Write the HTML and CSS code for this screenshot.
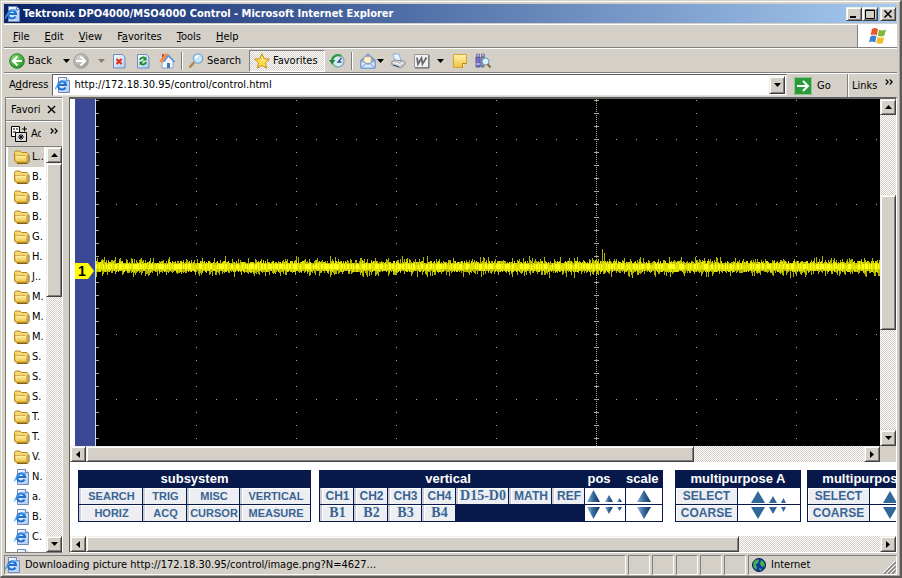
FILE: index.html
```html
<!DOCTYPE html>
<html lang="en">
<head>
<meta charset="utf-8">
<title>Tektronix DPO4000/MSO4000 Control</title>
<link rel="stylesheet" href="styles.css">
</head>
<body>
<svg class="defs" aria-hidden="true">
  <defs>
    <linearGradient id="gold" x1="0" y1="0" x2="0" y2="1"><stop offset="0" stop-color="#fff3a8"/><stop offset="1" stop-color="#efc244"/></linearGradient>
    <linearGradient id="paper" x1="0" y1="0" x2="1" y2="1"><stop offset="0" stop-color="#ffffff"/><stop offset="1" stop-color="#a9c8f2"/></linearGradient>
    <radialGradient id="green" cx=".35" cy=".3" r=".8"><stop offset="0" stop-color="#8fdc78"/><stop offset="1" stop-color="#1f8a1f"/></radialGradient>
    <radialGradient id="grey" cx=".35" cy=".3" r=".8"><stop offset="0" stop-color="#d2d2d0"/><stop offset="1" stop-color="#9c9c9a"/></radialGradient>
    <linearGradient id="steel" x1="0" y1="0" x2="1" y2="0"><stop offset="0" stop-color="#8fb4d6"/><stop offset=".5" stop-color="#34679c"/><stop offset="1" stop-color="#123459"/></linearGradient>
    <symbol id="folder" viewBox="0 0 16 16"><path d="M.5 12V3.500l1-1.500h4.500l1.500 1.500h5.500l1 1V12l-1 1.500H2z" fill="#f5d774" stroke="#b58a1f"/><path d="M1 6.500h10.500l1 1V13H2L1 12z" fill="url(#gold)" stroke="#c79a2c" stroke-width=".7"/><path d="M15 6v6.500L13.500 14.500H3" fill="none" stroke="#80621e"/></symbol>
    <symbol id="page" viewBox="0 0 16 16"><path d="M3.500.5h8l3 3v12h-11z" fill="url(#paper)" stroke="#7188b4"/><path d="M11.500.5v3h3" fill="#fff" stroke="#7188b4"/><path d="M10.500 10.500A4 4 0 1 1 11 8H4" fill="none" stroke="#1f6fd0" stroke-width="2.200"/><path d="M1 12.500C-.5 9 9 2 12.500 4.500" fill="none" stroke="#4aa3ee" stroke-width="1.200"/></symbol>
    <symbol id="up" viewBox="0 0 7 4"><path d="M0 4h7L3.500 0z"/></symbol>
    <symbol id="down" viewBox="0 0 7 4"><path d="M0 0h7L3.500 4z"/></symbol>
    <symbol id="left" viewBox="0 0 4 7"><path d="M4 0v7L0 3.500z"/></symbol>
    <symbol id="right" viewBox="0 0 4 7"><path d="M0 0v7l4-3.500z"/></symbol>
    <symbol id="more" viewBox="0 0 8 6"><path d="M.7.5L3.200 3 .7 5.500M4.700.5L7.200 3 4.700 5.500" fill="none" stroke="#000" stroke-width="1.200"/></symbol>
  </defs>
</svg>

<div class="window">
  <header class="titlebar">
    <svg class="icon"><use href="#page"/></svg>
    <h1 class="title">Tektronix DPO4000/MSO4000 Control - Microsoft Internet Explorer</h1>
    <div class="winbuttons">
      <button class="bevel winbtn" aria-label="Minimize"><svg viewBox="0 0 12 10"><path d="M2 7h6v2H2z"/></svg></button>
      <button class="bevel winbtn" aria-label="Maximize"><svg viewBox="0 0 12 10"><path d="M1.500 1h9v8.500h-9zM1 1.500h10" fill="none" stroke="#000"/></svg></button>
      <button class="bevel winbtn close" aria-label="Close"><svg viewBox="0 0 12 10"><path d="M2.500 1.500l7 7M9.500 1.500l-7 7" stroke="#000" stroke-width="1.600"/></svg></button>
    </div>
  </header>

  <div class="menurow">
    <nav class="menubar">
      <button class="menu"><u>F</u>ile</button>
      <button class="menu"><u>E</u>dit</button>
      <button class="menu"><u>V</u>iew</button>
      <button class="menu">F<u>a</u>vorites</button>
      <button class="menu"><u>T</u>ools</button>
      <button class="menu"><u>H</u>elp</button>
    </nav>
    <div class="flagbox">
      <svg class="flag" viewBox="0 0 20 18"><path d="M4 2c2-1.500 4-1 6 .2L8.800 8.500C7 7.300 5 7 2.600 8.300z" fill="#e8582c"/><path d="M11 2.800c2 1 4.500 1 7-.4l-1.600 6.200c-2 1.300-4.500 1.200-6.600.2z" fill="#7db83a"/><path d="M2.400 9.400c2-1.400 4-1.200 6.100 0l-1.300 6.200c-2-1.200-4-1.400-6.200 0z" fill="#3b7fd8"/><path d="M9.600 9.900c2 1.100 4.500 1 6.600 0l-1.500 6c-2.200 1.300-4.300 1.200-6.400.2z" fill="#f5bd28"/></svg>
    </div>
  </div>

  <div class="toolbar">
    <button class="tool back"><svg class="icon" viewBox="0 0 16 16"><circle cx="8" cy="8" r="7.300" fill="url(#green)" stroke="#27802a"/><path d="M8.500 3.500L4 8l4.500 4.500M4.500 8H13" fill="none" stroke="#fff" stroke-width="2"/></svg>Back</button>
    <button class="tool drop" aria-label="Back history"><svg class="arrow"><use href="#down"/></svg></button>
    <button class="tool forward" aria-label="Forward"><svg class="icon" viewBox="0 0 16 16"><circle cx="8" cy="8" r="7.300" fill="url(#grey)" stroke="#a0a09c"/><path d="M7.500 3.500L12 8l-4.500 4.500M11.500 8H3" fill="none" stroke="#fff" stroke-width="2"/></svg></button>
    <button class="tool drop faded" aria-label="Forward history"><svg class="arrow"><use href="#down"/></svg></button>
    <button class="tool stop" aria-label="Stop"><svg class="icon" viewBox="0 0 16 16"><path d="M2.500 1.500h9l2.500 2.500v11H2.500z" fill="url(#paper)" stroke="#6f8cc0"/><path d="M5.500 6l5 5M10.500 6l-5 5" stroke="#e03412" stroke-width="2.200"/></svg></button>
    <button class="tool refresh" aria-label="Refresh"><svg class="icon" viewBox="0 0 16 16"><path d="M2.500 1.500h9l2.500 2.500v11H2.500z" fill="url(#paper)" stroke="#6f8cc0"/><path d="M5 7c.5-3 4-3 5-1.500M11 9c-.5 3-4 3-5 1.500" fill="none" stroke="#168c20" stroke-width="1.800"/><path d="M11.500 3.500v4h-4zM4.500 12.500v-4h4z" fill="#168c20"/></svg></button>
    <button class="tool home" aria-label="Home"><svg class="icon" viewBox="0 0 16 16"><path d="M3 8l6-5 5 5v7H3z" fill="#f4f7ff" stroke="#7f94bb" stroke-width=".8"/><path d="M3 1h2v4H3z" fill="#b94b31"/><path d="M0 8.500L6.500.500h3l-5 9z" fill="#ee8e48"/><path d="M5 8.500l4.500-6 6 6.500" fill="none" stroke="#6291d8" stroke-width="1.600"/><path d="M8 10h3v5H8z" fill="#3f76be"/></svg></button>
    <span class="sep"></span>
    <button class="tool search"><svg class="icon" viewBox="0 0 16 16"><path d="M6 9.500L1.500 14.500" stroke="#b98245" stroke-width="2.600"/><circle cx="10" cy="5.500" r="4.700" fill="#c9e8fc" stroke="#7fa6cd" stroke-width="1.300"/><path d="M7.500 5a3 3 0 0 1 3-2.300" stroke="#fff" stroke-width="1.500" fill="none"/></svg>Search</button>
    <button class="tool favorites"><svg class="icon" viewBox="0 0 16 16"><path d="M8 .8l2.200 4.900 5.200.5-3.900 3.600 1.200 5.300L8 12.400l-4.700 2.700 1.200-5.300L.6 6.200l5.200-.5z" fill="#ffdc4e" stroke="#c88c12"/><path d="M8 3l1 3.500 3.500.5L8 8z" fill="#fff6b0"/></svg>Favorites</button>
    <button class="tool history" aria-label="History"><svg class="icon" viewBox="0 0 16 16"><circle cx="9" cy="8" r="6" fill="#d6ecfa" stroke="#8ea6b9" stroke-width="1.500"/><path d="M12 3A6 6 0 0 0 3 8" fill="none" stroke="#2c9b48" stroke-width="2.400"/><path d="M4 10.500A6 6 0 0 0 9 14" fill="none" stroke="#7cc58c" stroke-width="1.500"/><path d="M0 7h6.500L3 11.500z" fill="#218a38"/><path d="M12.500 5L9 9h3.500" fill="none" stroke="#31536e" stroke-width="1.300"/></svg></button>
    <span class="sep"></span>
    <button class="tool mail" aria-label="Mail"><svg class="icon" viewBox="0 0 16 16"><path d="M1 7l7-6 7 6v8H1z" fill="#86afe4" stroke="#6286bd"/><path d="M4 4h7v6H4z" fill="#fff1ca" stroke="#dcae61" stroke-width=".6"/><path d="M1 7.500l7 4 7-4V15H1z" fill="#d5e8ff" stroke="#6b92c8" stroke-width=".8"/><path d="M1 15l5-4.500M15 15l-5-4.500" stroke="#7299ce"/></svg><svg class="arrow"><use href="#down"/></svg></button>
    <button class="tool print" aria-label="Print"><svg class="icon" viewBox="0 0 16 16"><path d="M3 1h6l2 7H5z" fill="#eaf4ff" stroke="#7ca4db" stroke-width=".8"/><path d="M1.500 9L5 7l9 1 1.500 3-5 4L2 12z" fill="#c5c8ce" stroke="#777e8a" stroke-width=".8"/><path d="M3 9.500l7 2 4-2.500" fill="none" stroke="#fff"/><path d="M3 12l6 2" stroke="#3d506e"/></svg></button>
    <button class="tool edit" aria-label="Edit"><svg class="icon" viewBox="0 0 16 16"><path d="M.5 1.500h14v13H.5z" fill="#f2f2f2" stroke="#999"/><path d="M1 15h14V2" fill="none" stroke="#666"/><path d="M3 4.500l1 6.500 3.500-6L8.500 11l4-6.500" fill="none" stroke="#6a6a6a" stroke-width="1.800"/></svg><svg class="arrow"><use href="#down"/></svg></button>
    <button class="tool note" aria-label="Discuss"><svg class="icon" viewBox="0 0 16 16"><path d="M1.500 1.500h13v9l-4 4h-9z" fill="url(#gold)" stroke="#d5a32c"/><path d="M14.500 10.500h-4v4" fill="#fff1a8" stroke="#bb8315"/></svg></button>
    <button class="tool research" aria-label="Research"><svg class="icon" viewBox="0 0 16 16"><path d="M1 4h4v10H1z" fill="#7774c6" stroke="#48458a" stroke-width=".8"/><path d="M1.500 1h3v3h-3zM6.500 1h3v3h-3z" fill="#a9acd8" stroke="#5a5c94" stroke-width=".6"/><path d="M6 4h3v10H6z" fill="#8d98bd" stroke="#4f5a7c" stroke-width=".8"/><path d="M1 11h4" stroke="#e2e2fa"/><circle cx="10.500" cy="8.500" r="3.500" fill="#d5f1ff" stroke="#6a96b9"/><path d="M12.500 11l3 3.500" stroke="#8c682e" stroke-width="2"/></svg></button>
  </div>

  <form class="addressbar">
    <label class="addrlabel" for="address">A<u>d</u>dress</label>
    <div class="addrbox">
      <svg class="icon"><use href="#page"/></svg>
      <input class="addrinput" id="address" type="text" value="http://172.18.30.95/control/control.html">
      <button class="bevel dropbtn" type="button" aria-label="Show addresses"><svg class="arrow"><use href="#down"/></svg></button>
    </div>
    <button class="go" type="button"><svg class="goicon" viewBox="0 0 18 18"><path d="M0 0h18v18H0z" fill="#2b9a3a"/><path d="M.5.5h17v17H.5z" fill="none" stroke="#8bc98d"/><path d="M9 4l5 5-5 5M13.500 9H3" fill="none" stroke="#fff" stroke-width="2"/></svg>Go</button>
    <button class="links" type="button">Links<svg class="more"><use href="#more"/></svg></button>
  </form>

  <main class="content">
    <aside class="sidebar">
      <div class="sidehead"><h2 class="sidetitle">Favori</h2><button class="sideclose" aria-label="Close favorites"><svg viewBox="0 0 10 10"><path d="M1 1l8 8M9 1L1 9" stroke="#000" stroke-width="1.500"/></svg></button></div>
      <div class="sideadd">
        <button class="add"><svg class="icon" viewBox="0 0 16 16"><path d="M.5.5h8v10h-8zM2 3h2M5 3h2M2 6h3" fill="#fff" stroke="#000"/><path d="M11 3h5M13.500.5v5" stroke="#000"/><path d="M4.500 6.500h11v9h-11z" fill="#ddd" stroke="#000"/><path d="M10 8v6M7 11h6M8 9l4 4M12 9l-4 4" stroke="#000"/></svg><span class="addtext">Add...</span></button>
        <svg class="more"><use href="#more"/></svg>
      </div>
      <div class="sidebody">
        <nav class="favlist" id="favlist"></nav>
        <div class="vscroll">
          <button class="bevel sbtn" aria-label="Scroll up"><svg class="arrow"><use href="#up"/></svg></button>
          <div class="bevel thumb sidethumb"></div>
          <div class="track"></div>
          <button class="bevel sbtn" aria-label="Scroll down"><svg class="arrow"><use href="#down"/></svg></button>
        </div>
      </div>
    </aside>

    <div class="frames">
      <section class="scopeframe">
        <div class="scoperow">
          <div class="scope">
            <div class="gutter">
              <svg class="marker" viewBox="0 0 20 16"><path d="M0 0h13l6 8-6 8H0z" fill="#ff0"/><text class="markertext" x="7" y="13" text-anchor="middle">1</text></svg>
            </div>
            <svg class="screen" id="screen" role="img" aria-label="Channel 1 waveform"></svg>
          </div>
          <div class="vscroll">
            <button class="bevel sbtn" aria-label="Scroll up"><svg class="arrow"><use href="#up"/></svg></button>
            <div class="track mainbefore"></div>
            <div class="bevel thumb mainthumb"></div>
            <div class="track"></div>
            <button class="bevel sbtn" aria-label="Scroll down"><svg class="arrow"><use href="#down"/></svg></button>
          </div>
        </div>
        <div class="hscroll cornered">
          <button class="bevel sbtn" aria-label="Scroll left"><svg class="harrow"><use href="#left"/></svg></button>
          <div class="bevel thumb scopethumb"></div>
          <div class="track"></div>
          <button class="bevel sbtn" aria-label="Scroll right"><svg class="harrow"><use href="#right"/></svg></button>
        </div>
      </section>

      <section class="controlframe">
        <div class="panels">
          <div class="panel subsystem">
            <h3 class="head span">subsystem</h3>
            <button class="key">SEARCH</button><button class="key">TRIG</button><button class="key">MISC</button><button class="key">VERTICAL</button>
            <button class="key">HORIZ</button><button class="key">ACQ</button><button class="key">CURSOR</button><button class="key">MEASURE</button>
          </div>
          <div class="panel vertical">
            <h3 class="head seven">vertical</h3><h3 class="head pos">pos</h3><h3 class="head scale">scale</h3>
            <button class="key mid">CH1</button><button class="key mid">CH2</button><button class="key mid">CH3</button><button class="key mid">CH4</button><button class="key serif">D15-D0</button><button class="key mid">MATH</button><button class="key mid">REF</button>
            <button class="key plain" aria-label="Position up"><svg class="tris" viewBox="0 0 36 14"><path d="M0 13h13L6.500 1z" fill="url(#steel)"/><path d="M18 13h8l-4-7z" fill="url(#steel)"/><path d="M30 13h5l-2.500-4z" fill="url(#steel)"/></svg></button>
            <button class="key plain" aria-label="Scale up"><svg class="tri" viewBox="0 0 14 14"><path d="M0 13h14L7 1z" fill="url(#steel)"/></svg></button>
            <button class="key serif">B1</button><button class="key serif">B2</button><button class="key serif">B3</button><button class="key serif">B4</button><span class="blank"></span>
            <button class="key plain" aria-label="Position down"><svg class="tris" viewBox="0 0 36 14"><path d="M0 1h13L6.500 13z" fill="url(#steel)"/><path d="M18 1h8l-4 7z" fill="url(#steel)"/><path d="M30 1h5l-2.500 4z" fill="url(#steel)"/></svg></button>
            <button class="key plain" aria-label="Scale down"><svg class="tri" viewBox="0 0 14 14"><path d="M0 1h14L7 13z" fill="url(#steel)"/></svg></button>
          </div>
          <div class="panel multi">
            <h3 class="head span">multipurpose A</h3>
            <button class="key wide">SELECT</button>
            <div class="knob"><svg class="knobart" viewBox="0 0 36 30"><path d="M0 13h14L7 1zM18 13h8l-4-7zM30 13h5l-2.500-5zM0 17h14L7 29zM18 17h8l-4 7zM30 17h5l-2.500 5z" fill="#33669a"/></svg></div>
            <button class="key wide">COARSE</button>
          </div>
          <div class="panel multi">
            <h3 class="head span">multipurpose B</h3>
            <button class="key wide">SELECT</button>
            <div class="knob"><svg class="knobart" viewBox="0 0 36 30"><path d="M0 13h14L7 1zM18 13h8l-4-7zM30 13h5l-2.500-5zM0 17h14L7 29zM18 17h8l-4 7zM30 17h5l-2.500 5z" fill="#33669a"/></svg></div>
            <button class="key wide">COARSE</button>
          </div>
        </div>
        <div class="hscroll">
          <button class="bevel sbtn" aria-label="Scroll left"><svg class="harrow"><use href="#left"/></svg></button>
          <div class="bevel thumb controlthumb"></div>
          <div class="track"></div>
          <button class="bevel sbtn" aria-label="Scroll right"><svg class="harrow"><use href="#right"/></svg></button>
        </div>
      </section>
    </div>
  </main>

  <footer class="statusbar">
    <div class="cell message"><svg class="icon"><use href="#page"/></svg>Downloading picture http://172.18.30.95/control/image.png?N=4627...</div>
    <div class="cell"></div><div class="cell"></div><div class="cell"></div><div class="cell"></div><div class="cell"></div>
    <div class="cell zone"><svg class="globe" viewBox="0 0 14 14"><circle cx="7" cy="7" r="6.500" fill="#1238a8" stroke="#071a4f"/><path d="M2 3.500C4 1 6 1 7 2L6 5 3.500 6.500 5 9l-1 3C1 10 .5 6 2 3.500zM9 2l3 2 1 4-3 1-2-3z" fill="#42b34a"/><path d="M7 10l3 1-2 2z" fill="#42b34a"/></svg>Internet
      <svg class="grip" viewBox="0 0 13 13"><path d="M1 13L13 1M5 13l8-8M9 13l4-4" stroke="#808080" stroke-width="1.500"/><path d="M0 12L12 0M4 12l8-8M8 12l4-4" stroke="#fff"/></svg>
    </div>
  </footer>
</div>
<script src="script.js"></script>
</body>
</html>
```

FILE: styles.css
```css
* { box-sizing: border-box; }
html, body { height: 100%; }
body {
  margin: 0;
  overflow: hidden;
  background: #d4d0c8;
  color: #000;
  font: 11px/14px "DejaVu Sans Condensed", "DejaVu Sans", sans-serif;
}
h1, h2, h3 { margin: 0; font: inherit; }
button { margin: 0; padding: 0; border: 0; background: none; color: inherit; font: inherit; white-space: nowrap; }
svg { display: block; flex: none; }
.defs { position: absolute; width: 0; height: 0; }
.icon { width: 16px; height: 16px; }
.arrow { width: 7px; height: 4px; }
.harrow { width: 4px; height: 7px; }
.more { width: 8px; height: 6px; }

.window {
  display: flex;
  flex-direction: column;
  height: 100vh;
  padding: 2px 3px 1px 3px;
  border: 1px solid #d4d0c8;
  border-right: 2px solid #5c5a56;
  border-bottom: 2px solid #5c5a56;
  box-shadow: inset 1px 1px #fff, inset -1px -1px #aaa69e;
}
.bevel {
  background: #d4d0c8;
  border: 1px solid;
  border-color: #f0eee8 #404040 #404040 #f0eee8;
  box-shadow: inset 1px 1px #fff, inset -1px -1px #808080;
}

.titlebar {
  display: flex;
  align-items: center;
  flex: none;
  gap: 2px;
  height: 19px;
  margin-top: 1px;
  padding: 0 1px;
  background: linear-gradient(90deg, #0a246a, #a6caf0);
  color: #fff;
}
.title { flex: 1; font-weight: bold; white-space: nowrap; overflow: hidden; }
.winbuttons { display: flex; }
.winbtn { display: grid; place-items: center; width: 16px; height: 14px; }
.winbtn svg { width: 12px; height: 10px; }
.close { margin-left: 2px; }

.menurow { display: flex; flex: none; height: 24px; margin-top: 1px; border-top: 1px solid #fff; border-bottom: 1px solid #808080; }
.menubar { display: flex; flex: 1; align-items: center; gap: 15px; padding: 2px 0 0 9px; }
.flagbox { display: grid; place-items: center; width: 40px; background: #fff; border-left: 1px solid #808080; }
.flag { width: 20px; height: 18px; }

.toolbar { display: flex; flex: none; align-items: center; height: 25px; padding-left: 5px; border-top: 1px solid #fff; border-bottom: 1px solid #808080; }
.tool { display: flex; align-items: center; gap: 3px; height: 22px; }
.back { width: 50px; }
.drop { width: 14px; justify-content: center; }
.faded { fill: #848078; width: 20px; }
.stop, .refresh { width: 24px; }
.home { width: 22px; }
.sep { width: 2px; height: 18px; border-left: 1px solid #808080; border-right: 1px solid #fff; }
.search { width: 66px; padding-left: 5px; }
.favorites {
  width: 76px;
  padding-left: 4px;
  border: 1px solid;
  border-color: #808080 #fff #fff #808080;
  background: repeating-conic-gradient(#fff 0 25%, #d4d0c8 0 50%) 0 0 / 2px 2px;
}
.forward { width: 18px; }
.history { width: 26px; padding-left: 4px; }
.mail { width: 37px; padding-left: 7px; gap: 1px; }
.print { width: 24px; }
.edit { width: 38px; gap: 7px; }
.note { width: 23px; }

.addressbar { display: flex; flex: none; align-items: stretch; height: 24px; margin: 0; border-top: 1px solid #fff; }
.addrlabel { padding: 4px 4px 0 5px; }
.addrbox { display: flex; flex: 1; align-items: center; height: 22px; padding-left: 2px; background: #fff; border: 1px solid; border-color: #606060 #e4e0d8 #e4e0d8 #606060; }
.addrinput { flex: 1; min-width: 0; padding: 0 0 0 3px; border: 0; outline: 0; background: none; color: #000; font: inherit; }
.dropbtn { display: grid; place-items: center; width: 16px; height: 18px; margin-right: 1px; }
.go { display: flex; align-items: center; gap: 5px; width: 60px; padding-left: 7px; }
.goicon { width: 18px; height: 18px; }
.links { display: flex; align-items: center; gap: 8px; width: 50px; padding-left: 4px; border-left: 1px solid #808080; box-shadow: inset 1px 0 #fff; }
.links .more { margin-bottom: 8px; }

.content { display: flex; flex: 1; min-height: 0; }
.sidebar { display: flex; flex-direction: column; width: 58px; margin: 0 6px 0 1px; border: 1px solid #808080; border-right-color: #fff; }
.sidehead { display: flex; flex: none; align-items: center; justify-content: space-between; height: 23px; padding: 0 6px 0 5px; border-top: 1px solid #fff; border-bottom: 1px solid #808080; }
.sideclose svg { width: 9px; height: 9px; }
.sideadd { display: flex; flex: none; align-items: center; justify-content: space-between; height: 26px; padding: 0 4px 0 5px; border-top: 1px solid #fff; border-bottom: 1px solid #808080; }
.add { display: flex; align-items: center; gap: 4px; }
.addtext { width: 10px; overflow: hidden; text-align: left; }
.sideadd .more { margin-bottom: 6px; }
.sidebody { display: flex; flex: 1; min-height: 0; background: #fff; }
.favlist { flex: 1; min-width: 0; overflow: hidden; }
.fav { display: flex; align-items: center; gap: 2px; height: 20px; margin: 0 2px; padding-left: 6px; color: #000; text-decoration: none; white-space: nowrap; overflow: hidden; }
.fav.current { background: #d4d0c8; }

.track { flex: 1; background: repeating-conic-gradient(#fff 0 25%, #d4d0c8 0 50%) 0 0 / 2px 2px; }
.sbtn { display: grid; place-items: center; flex: none; width: 16px; height: 16px; }
.thumb { flex: none; }
.vscroll { display: flex; flex: none; flex-direction: column; width: 16px; }
.hscroll { display: flex; flex: none; height: 16px; background: #d4d0c8; }
.cornered { padding-right: 16px; }
.sidethumb { height: 33%; }
.mainbefore { flex: none; height: 23%; }
.mainthumb { height: 39%; }
.scopethumb { width: 75%; }
.controlthumb { width: 79%; }

.frames { display: flex; flex: 1; flex-direction: column; min-width: 0; border: 1px solid; border-color: #606060 #fff #fff #606060; border-top-width: 2px; }
.scopeframe { display: flex; flex: 1; flex-direction: column; min-height: 0; }
.scoperow { display: flex; flex: 1; min-height: 0; }
.scope { display: flex; flex: 1; min-width: 0; padding-left: 5px; background: #fff; }
.gutter { display: flex; align-items: center; flex: none; width: 21px; padding-bottom: 4px; background: #3b4994; border-right: 1px solid #c4dcf4; }
.marker { width: 20px; height: 16px; }
.markertext { font: bold 14px "Liberation Sans", sans-serif; }
.screen { flex: 1 1 0; min-width: 0; height: 100%; background: #000; shape-rendering: crispEdges; }

.controlframe { flex: none; background: #fff; }
.panels { display: flex; height: 74px; padding: 8px 0 0 8px; overflow: hidden; }
.panel {
  display: grid;
  flex: none;
  grid-template-rows: 17px 16px 16px;
  gap: 1px;
  height: 52px;
  margin-right: 8px;
  padding: 0 1px 1px;
  background: #06194a;
}
.subsystem { grid-template-columns: 63px 43px 52px 70px; }
.vertical { grid-template-columns: repeat(4, 33px) 52px 42px 32px 40px 36px; margin-right: 12px; }
.multi { grid-template-columns: 61px 62px; margin-right: 6px; }
.head { color: #fff; font: bold 13px/18px "Liberation Sans", Arial, sans-serif; text-align: center; }
.span { grid-column: 1 / -1; }
.seven { grid-column: span 7; padding-right: 8px; }
.pos { padding-right: 12px; }
.scale { padding-right: 4px; }
.blank { grid-column: span 3; }
.key {
  background: #eceef2;
  border-left: 2px solid #c6cbd6;
  box-shadow: inset 1px 1px #fff;
  color: #396493;
  font: bold 11px/16px "Liberation Sans", Arial, sans-serif;
  text-align: center;
  overflow: hidden;
}
.mid { font-size: 12px; }
.wide { border: 0; font-size: 12px; }
.serif { font: bold 14px/16px "Liberation Serif", "Times New Roman", serif; }
.plain { display: grid; place-items: center; border: 0; background: #fff; }
.tris { width: 36px; height: 14px; }
.tri { width: 14px; height: 14px; }
.knob { display: grid; place-items: center; grid-row: 2 / 4; grid-column: 2; background: linear-gradient(#fff 16px, #06194a 16px 17px, #fff 17px); }
.knobart { width: 36px; height: 30px; }

.statusbar { display: flex; flex: none; gap: 2px; height: 22px; padding-top: 2px; }
.cell { width: 22px; border: 1px solid; border-color: #808080 #fff #fff #808080; }
.message { display: flex; flex: 1; align-items: center; gap: 4px; min-width: 0; white-space: nowrap; overflow: hidden; }
.zone { display: flex; align-items: center; gap: 5px; width: 149px; padding-left: 3px; }
.globe { width: 14px; height: 14px; }
.grip { width: 13px; height: 13px; margin: 4px 0 0 auto; }
```

FILE: script.js
```js
// Favorites list: folders first, then saved pages; the last row is only half in view.
const favorites = [
  ...['L..', 'B.', 'B.', 'B.', 'G.', 'H.', 'J..', 'M.', 'M.', 'M.', 'S.', 'S.', 'S.', 'T.', 'T.', 'V.'].map(t => ['folder', t]),
  ...['N.', 'a.', 'B.', 'C.', ''].map(t => ['page', t])
];
document.getElementById('favlist').innerHTML = favorites.map(([icon, text], i) =>
  `<a class="fav${i === 0 ? ' current' : ''}" href="#"><svg class="icon"><use href="#${icon}"/></svg>${text}</a>`
).join('');

// Graticule: 100 px per time division, 65 px per voltage division.
let marks = '';
for (let x = 0; x <= 1000; x += 20) {
  for (let y = 40; y <= 400; y += 65) marks += `M${x} ${y}h1v1h-1z`;
}
for (let y = 1; y < 400; y += 13) {
  for (let x = 0; x <= 1000; x += 100) marks += `M${x} ${y}h1v1h-1z`;
  marks += `M0 ${y}h3v1h-3zM498 ${y}h5v1h-5z`;
}
let centre = '';
for (let y = 0; y < 400; y += 2) centre += `M500 ${y}h1v1h-1z`;

// Channel 1 trace: flat line with noise and one glitch just after the trigger.
let seed = 41;
const rnd = () => (seed = (seed * 16807) % 2147483647) / 2147483647;
let fringe = '', core = '', bright = '';
for (let x = 0; x < 1000; x++) {
  const glitch = x === 506 ? 14 : x === 508 ? 9 : 0;
  const up = 4 + Math.floor(rnd() * rnd() * 8) + glitch;
  const low = 4 + Math.floor(rnd() * rnd() * 8);
  fringe += `M${x} ${168 - up}h1v${up + low}h-1z`;
  const a = 2 + Math.floor(rnd() * 5), b = 2 + Math.floor(rnd() * 4);
  core += `M${x} ${168 - a}h1v${a + b}h-1z`;
  if (rnd() > 0.5) bright += `M${x} 165h1v5h-1z`;
}
document.getElementById('screen').innerHTML =
  `<path d="${marks}" fill="#a8a898"/><path d="${centre}" fill="#a8a898"/>` +
  `<path d="${fringe}" fill="#b4b400"/><path d="${core}" fill="#e2e200"/><path d="${bright}" fill="#ffff18"/>`;
```
